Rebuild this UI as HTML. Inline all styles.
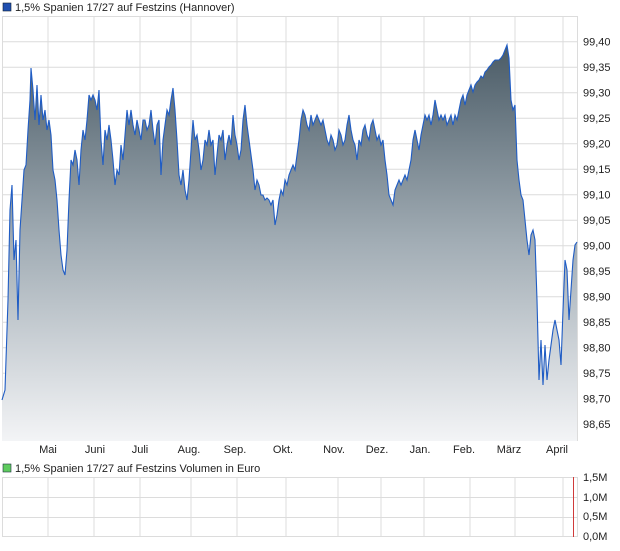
<!DOCTYPE html>
<html><head><meta charset="utf-8"><style>
body{margin:0;width:620px;height:546px;background:#fff;overflow:hidden;font-family:"Liberation Sans",sans-serif}
svg text{font-family:"Liberation Sans",sans-serif;font-size:11px;fill:#222}
</style></head><body>
<svg width="620" height="546" viewBox="0 0 620 546">
<defs><linearGradient id="g" x1="0" y1="45" x2="0" y2="441" gradientUnits="userSpaceOnUse"><stop offset="0" stop-color="#4a5b66"/><stop offset="0.5" stop-color="#a2adb5"/><stop offset="1" stop-color="#f3f4f6"/></linearGradient></defs>
<rect x="3" y="3" width="8" height="8" fill="#1f4fb0" stroke="#123" stroke-width="0.6"/>
<text x="15" y="11">1,5% Spanien 17/27 auf Festzins (Hannover)</text>
<g stroke="#dcdcdc" stroke-width="1" fill="none">
<rect x="2.5" y="16.5" width="575" height="424"/>
<path d="M48 16V441M94 16V441M140 16V441M191 16V441M237 16V441M286 16V441M338 16V441M381 16V441M424 16V441M470 16V441M515 16V441M563 16V441"/>
<path d="M2 41.7H578M2 67.2H578M2 92.7H578M2 118.2H578M2 143.7H578M2 169.2H578M2 194.7H578M2 220.2H578M2 245.7H578M2 271.2H578M2 296.7H578M2 322.2H578M2 347.7H578M2 373.2H578M2 398.7H578M2 424.2H578"/>
</g>
<path d="M2 400L5 390L8 300L10 210L12 185L14 260L16 240L18 320L20 230L22 200L24 170L26 165L28 130L30 100L31 68L33 90L35 120L37 85L39 125L41 95L43 120L45 110L47 130L49 120L51 135L53 170L55 180L57 200L59 230L61 255L63 270L65 275L67 250L69 200L71 160L73 165L75 150L77 160L79 185L81 150L83 130L85 140L87 120L89 95L91 100L93 95L95 100L97 110L99 90L101 140L103 165L105 130L107 140L109 125L111 140L113 160L115 185L117 170L119 175L121 145L123 160L125 135L127 110L129 125L131 110L133 125L135 135L137 120L139 130L141 140L143 120L145 120L147 130L149 125L151 110L153 130L155 145L157 125L159 120L161 175L163 140L165 125L167 110L169 115L171 100L173 88L175 110L177 140L179 175L181 185L183 170L185 190L187 200L189 180L191 150L193 120L195 140L197 135L199 150L201 170L203 160L205 140L207 145L209 130L211 145L213 140L215 175L217 155L219 135L221 140L223 130L225 160L227 145L229 135L231 145L233 115L235 135L237 145L239 160L241 150L243 120L245 105L247 125L249 140L251 155L253 170L255 190L257 180L259 185L261 195L263 195L265 200L267 198L269 200L271 205L273 200L275 225L277 215L279 200L281 190L283 195L285 180L287 185L289 175L291 170L293 165L295 170L297 155L299 140L301 120L303 110L305 115L307 125L309 130L311 115L313 125L315 120L317 115L319 120L321 125L323 120L325 130L327 140L329 145L331 135L333 140L335 150L337 145L339 130L341 135L343 145L345 140L347 125L349 115L351 130L353 140L355 145L357 160L359 140L361 145L363 130L365 125L367 135L369 140L371 125L373 120L375 130L377 140L379 135L381 145L383 140L385 160L387 175L389 195L391 200L393 205L395 190L397 185L399 180L401 185L403 180L405 175L407 180L409 170L411 160L413 140L415 130L417 140L419 150L421 135L423 125L425 115L427 120L429 115L431 125L433 115L435 100L437 110L439 120L441 115L443 120L445 115L447 125L449 120L451 115L453 125L455 115L457 120L459 110L461 100L463 95L465 105L467 95L469 90L471 85L473 92L475 85L477 82L479 80L481 76L483 78L485 72L487 70L489 67L491 65L493 62L495 60L497 60L499 60L501 58L503 55L505 50L507 45L509 58L511 100L513 110L515 105L517 160L519 180L521 195L523 200L525 220L527 240L529 255L531 235L533 230L535 240L537 300L539 380L541 340L543 385L545 345L547 380L549 360L551 345L553 330L555 320L557 330L559 340L561 365L563 310L565 260L567 270L569 320L571 290L573 260L575 245L577 242L577 441L2 441Z" fill="url(#g)"/>
<path fill="none" stroke="#1f5cc4" stroke-width="1.1" d="M2 400L5 390L8 300L10 210L12 185L14 260L16 240L18 320L20 230L22 200L24 170L26 165L28 130L30 100L31 68L33 90L35 120L37 85L39 125L41 95L43 120L45 110L47 130L49 120L51 135L53 170L55 180L57 200L59 230L61 255L63 270L65 275L67 250L69 200L71 160L73 165L75 150L77 160L79 185L81 150L83 130L85 140L87 120L89 95L91 100L93 95L95 100L97 110L99 90L101 140L103 165L105 130L107 140L109 125L111 140L113 160L115 185L117 170L119 175L121 145L123 160L125 135L127 110L129 125L131 110L133 125L135 135L137 120L139 130L141 140L143 120L145 120L147 130L149 125L151 110L153 130L155 145L157 125L159 120L161 175L163 140L165 125L167 110L169 115L171 100L173 88L175 110L177 140L179 175L181 185L183 170L185 190L187 200L189 180L191 150L193 120L195 140L197 135L199 150L201 170L203 160L205 140L207 145L209 130L211 145L213 140L215 175L217 155L219 135L221 140L223 130L225 160L227 145L229 135L231 145L233 115L235 135L237 145L239 160L241 150L243 120L245 105L247 125L249 140L251 155L253 170L255 190L257 180L259 185L261 195L263 195L265 200L267 198L269 200L271 205L273 200L275 225L277 215L279 200L281 190L283 195L285 180L287 185L289 175L291 170L293 165L295 170L297 155L299 140L301 120L303 110L305 115L307 125L309 130L311 115L313 125L315 120L317 115L319 120L321 125L323 120L325 130L327 140L329 145L331 135L333 140L335 150L337 145L339 130L341 135L343 145L345 140L347 125L349 115L351 130L353 140L355 145L357 160L359 140L361 145L363 130L365 125L367 135L369 140L371 125L373 120L375 130L377 140L379 135L381 145L383 140L385 160L387 175L389 195L391 200L393 205L395 190L397 185L399 180L401 185L403 180L405 175L407 180L409 170L411 160L413 140L415 130L417 140L419 150L421 135L423 125L425 115L427 120L429 115L431 125L433 115L435 100L437 110L439 120L441 115L443 120L445 115L447 125L449 120L451 115L453 125L455 115L457 120L459 110L461 100L463 95L465 105L467 95L469 90L471 85L473 92L475 85L477 82L479 80L481 76L483 78L485 72L487 70L489 67L491 65L493 62L495 60L497 60L499 60L501 58L503 55L505 50L507 45L509 58L511 100L513 110L515 105L517 160L519 180L521 195L523 200L525 220L527 240L529 255L531 235L533 230L535 240L537 300L539 380L541 340L543 385L545 345L547 380L549 360L551 345L553 330L555 320L557 330L559 340L561 365L563 310L565 260L567 270L569 320L571 290L573 260L575 245L577 242"/>
<g text-anchor="start">
<text x="583" y="45.5">99,40</text><text x="583" y="71">99,35</text><text x="583" y="96.5">99,30</text><text x="583" y="122">99,25</text><text x="583" y="147.5">99,20</text><text x="583" y="173">99,15</text><text x="583" y="198.5">99,10</text><text x="583" y="224">99,05</text><text x="583" y="249.5">99,00</text><text x="583" y="275">98,95</text><text x="583" y="300.5">98,90</text><text x="583" y="326">98,85</text><text x="583" y="351.5">98,80</text><text x="583" y="377">98,75</text><text x="583" y="402.5">98,70</text><text x="583" y="428">98,65</text>
</g>
<g text-anchor="middle">
<text x="48" y="453">Mai</text><text x="95" y="453">Juni</text><text x="140" y="453">Juli</text><text x="189" y="453">Aug.</text><text x="235" y="453">Sep.</text><text x="283" y="453">Okt.</text><text x="334" y="453">Nov.</text><text x="377" y="453">Dez.</text><text x="420" y="453">Jan.</text><text x="464" y="453">Feb.</text><text x="509" y="453">März</text><text x="557" y="453">April</text>
</g>
<rect x="3" y="464" width="8" height="8" fill="#5ecb5e" stroke="#234" stroke-width="0.6"/>
<text x="15" y="472">1,5% Spanien 17/27 auf Festzins Volumen in Euro</text>
<g stroke="#dcdcdc" fill="none">
<rect x="2.5" y="477.5" width="575" height="59"/>
<path d="M48 477V537M94 477V537M140 477V537M191 477V537M237 477V537M286 477V537M338 477V537M381 477V537M424 477V537M470 477V537M515 477V537M563 477V537M2 497.5H578M2 517.5H578"/>
</g>
<path d="M573.5 477V537" stroke="#d03a3a" stroke-width="1" fill="none"/>
<text x="583" y="481">1,5M</text><text x="583" y="501">1,0M</text><text x="583" y="520">0,5M</text><text x="583" y="540">0,0M</text>
</svg>
</body></html>
